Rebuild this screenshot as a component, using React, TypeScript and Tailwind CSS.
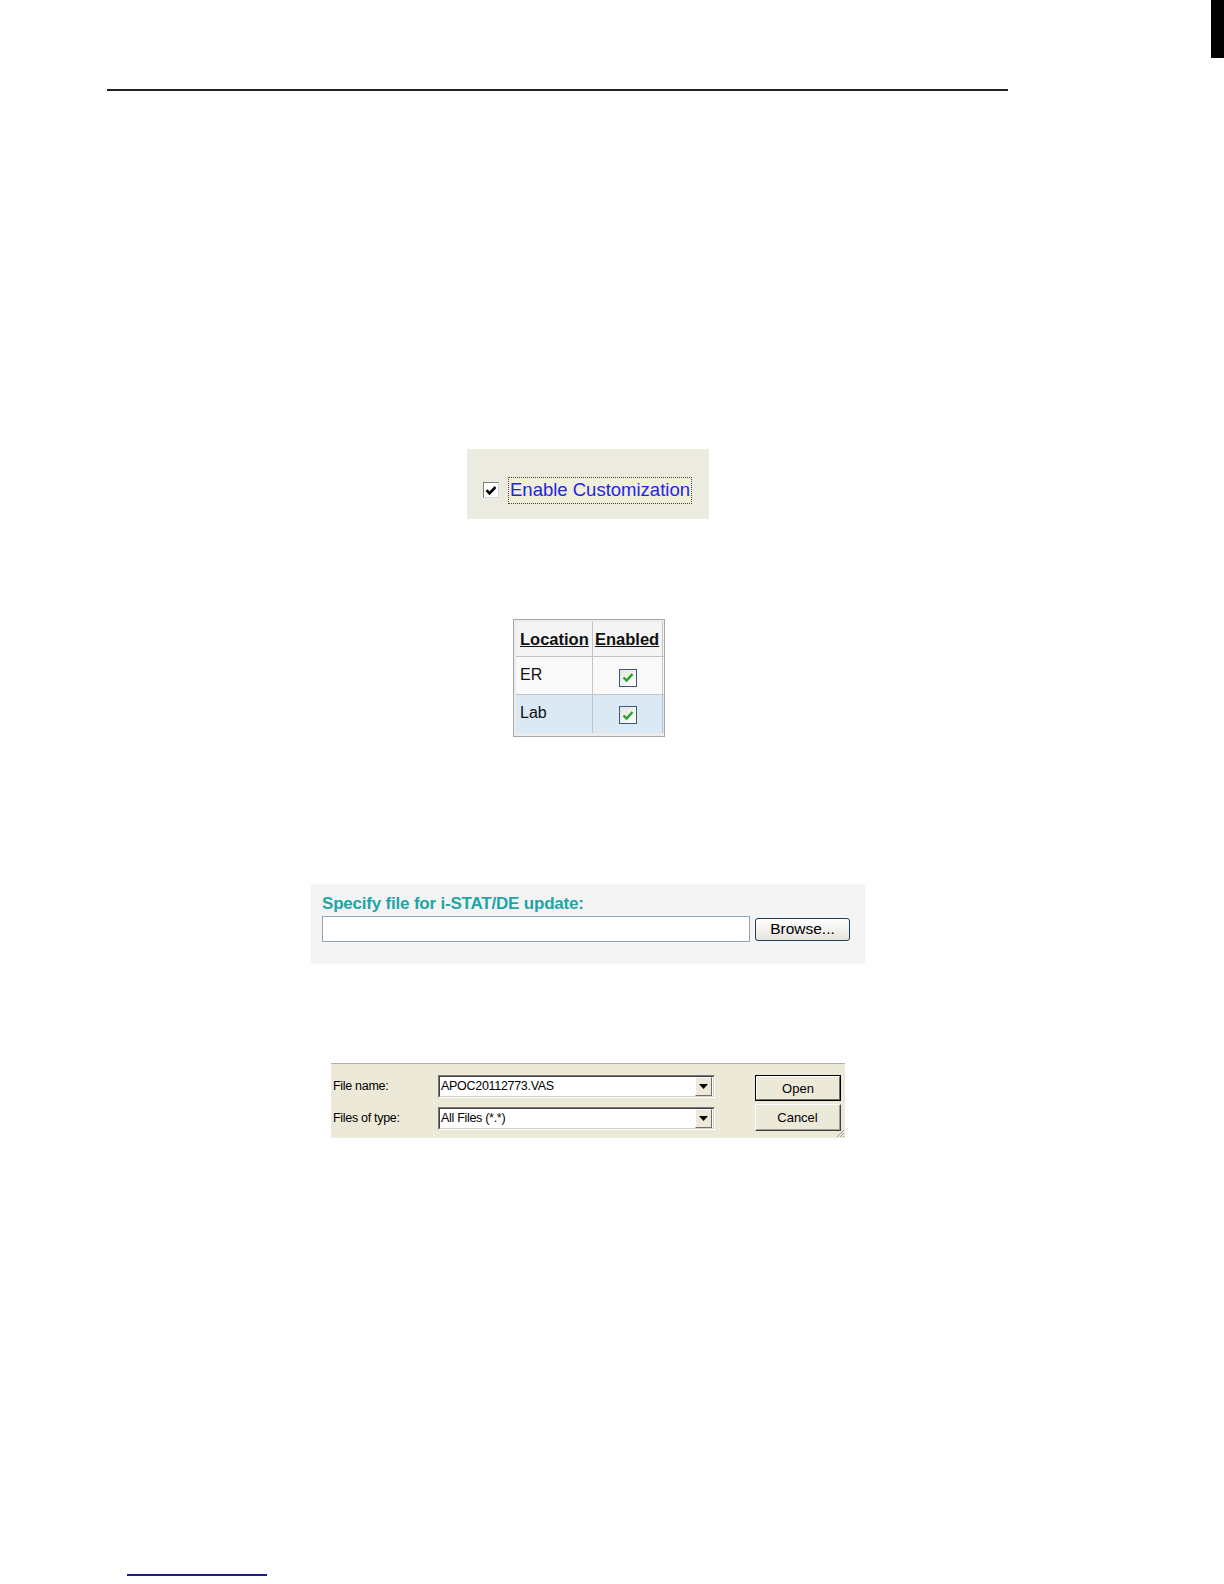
import React from "react";

function BlackCheck() {
  return (
    <svg width="12" height="11" viewBox="0 0 12 11">
      <path d="M1.5 5.2 L4.5 8.3 L10.5 2" fill="none" stroke="#000" strokeWidth="2.6" />
    </svg>
  );
}

function GreenCheck() {
  return (
    <div className="w-[18px] h-[18px] border border-[#3b5a7a] bg-gradient-to-br from-[#e4e4e0] to-white flex items-center justify-center">
      <svg width="12" height="11" viewBox="0 0 12 11">
        <path d="M1.5 5.5 L4.6 8.6 L10.5 2" fill="none" stroke="#22a322" strokeWidth="2.4" />
      </svg>
    </div>
  );
}

function Arrow() {
  return (
    <div className="w-[17px] h-[19px] bg-[#ece9d8] border border-t-white border-l-white border-b-[#716f64] border-r-[#716f64] flex items-center justify-center">
      <svg width="9" height="5" viewBox="0 0 9 5">
        <path d="M0 0 H9 L4.5 5 Z" fill="#000" />
      </svg>
    </div>
  );
}

function Combo({ value }: { value: string }) {
  return (
    <div className="w-[277px] h-[23px] border border-t-[#7a7a7a] border-l-[#7a7a7a] border-b-white border-r-white">
      <div className="h-full bg-white border border-t-[#404040] border-l-[#404040] border-b-[#d4d0c8] border-r-[#d4d0c8] flex items-center justify-between pr-px">
        <span className="pl-[1px] text-[12.5px] text-black leading-none tracking-[-0.3px]">{value}</span>
        <Arrow />
      </div>
    </div>
  );
}

export default function App() {
  return (
    <div className="relative w-[1224px] h-[1584px] bg-white overflow-hidden flex flex-col items-start" style={{ fontFamily: '"Liberation Sans", Arial, sans-serif' }}>
      <div className="absolute top-0 right-0 w-[13px] h-[58px] bg-black" />

      <div className="mt-[89px] ml-[107px] w-[901px] h-[2px] bg-[#222]" />

      <div className="mt-[358px] ml-[467px] w-[242px] h-[70px] bg-[#ecebdf] flex items-center pl-[16px] pt-[12px]">
        <div className="w-[16px] h-[16px] border border-t-[#808080] border-l-[#808080] border-b-[#d8d8d8] border-r-[#d8d8d8] bg-white flex items-center justify-center">
          <BlackCheck />
        </div>
        <div className="ml-[9px] px-px border border-dotted border-[#4a4a10] bg-[#f6f4d8]/40 h-[27px] flex items-center">
          <span className="text-[18.5px] text-[#2424e6] leading-none">Enable Customization</span>
        </div>
      </div>

      <div className="mt-[100px] ml-[513px] w-[152px] h-[118px] border border-[#a8a8a8] p-[2px] bg-[#ececec] overflow-hidden">
        <div className="grid grid-cols-[77px_70px_20px] w-[167px] text-[#111]">
          <div className="h-[35px] bg-[#f4f4f4] border-r border-b border-[#c4c4c4] flex items-center pl-[4px]">
            <span className="font-bold underline text-[16.5px] leading-none">Location</span>
          </div>
          <div className="h-[35px] bg-[#f4f4f4] border-r border-b border-[#c4c4c4] flex items-center pl-[2px]">
            <span className="font-bold underline text-[16.5px] leading-none">Enabled</span>
          </div>
          <div className="h-[35px] bg-[#f4f4f4] border-b border-[#c4c4c4] flex items-end pl-[1px] pb-[10px]">
            <div className="w-[2px] h-[2px] bg-[#c8a000]" />
          </div>

          <div className="h-[38px] bg-[#f9f9f9] border-r border-b border-[#c4c4c4] pl-[4px] pt-[6px]">
            <span className="text-[16px] leading-none">ER</span>
          </div>
          <div className="h-[38px] bg-[#f9f9f9] border-r border-b border-[#c4c4c4] flex items-center justify-center pt-[4px]">
            <GreenCheck />
          </div>
          <div className="h-[38px] bg-[#f9f9f9] border-b border-[#c4c4c4]" />

          <div className="h-[38px] bg-[#dbe9f5] border-r border-[#c4c4c4] pl-[4px] pt-[6px]">
            <span className="text-[16px] leading-none">Lab</span>
          </div>
          <div className="h-[38px] bg-[#dbe9f5] border-r border-[#c4c4c4] flex items-center justify-center pt-[2px]">
            <GreenCheck />
          </div>
          <div className="h-[38px] bg-[#dbe9f5]" />
        </div>
      </div>

      <div className="mt-[147px] ml-[311px] w-[554px] h-[80px] bg-[#f4f4f4] pl-[11px] pt-[10px]">
        <div className="text-[17px] font-bold text-[#1fa5a5] leading-[20px] tracking-[-0.2px]">Specify file for i-STAT/DE update:</div>
        <div className="flex items-center mt-[2px]">
          <div className="w-[428px] h-[26px] border border-[#8fa6ba] bg-white" />
          <div className="ml-[5px] w-[95px] h-[23px] rounded-[3px] border border-[#1f3d5c] bg-gradient-to-b from-white to-[#e6e4dc] flex items-center justify-center">
            <span className="text-[15.5px] leading-none text-black">Browse...</span>
          </div>
        </div>
      </div>

      <div className="mt-[99px] ml-[331px] w-[514px] h-[75px] bg-[#ece9d8] border-t border-[#b0b0b0] relative">
        <div className="flex pt-[11px]">
          <div className="flex flex-col">
            <div className="flex items-center h-[23px]">
              <span className="w-[107px] pl-[2px] text-[12.5px] leading-none text-black tracking-[-0.3px]">File name:</span>
              <Combo value="APOC20112773.VAS" />
            </div>
            <div className="flex items-center h-[23px] mt-[9px]">
              <span className="w-[107px] pl-[2px] text-[12.5px] leading-none text-black tracking-[-0.3px]">Files of type:</span>
              <Combo value="All Files (*.*)" />
            </div>
          </div>
          <div className="ml-[40px] flex flex-col">
            <div className="w-[86px] h-[26px] border border-black">
              <div className="h-full border border-t-white border-l-white border-b-[#716f64] border-r-[#716f64] flex items-center justify-center">
                <span className="text-[13px] leading-none text-black">Open</span>
              </div>
            </div>
            <div className="w-[86px] h-[27px] mt-[3px] border border-t-white border-l-white border-b-[#404040] border-r-[#404040]">
              <div className="h-full border-b border-r border-[#a09e92] flex items-center justify-center">
                <span className="text-[13px] leading-none text-black">Cancel</span>
              </div>
            </div>
          </div>
        </div>
        <svg className="absolute right-0 bottom-0" width="10" height="10" viewBox="0 0 10 10">
          <path d="M9 2 L2 9 M9 5 L5 9 M9 8 L8 9" stroke="#9c9a8e" strokeWidth="1" />
        </svg>
      </div>

      <div className="mt-[436px] ml-[127px] w-[140px] h-[2px] bg-[#1c1c8c]" />
    </div>
  );
}
